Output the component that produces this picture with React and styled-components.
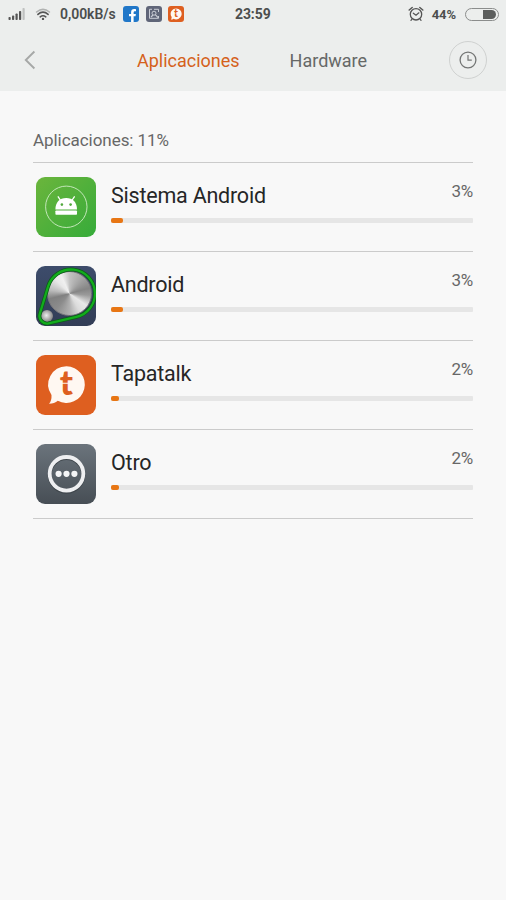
import React from 'react';
import styled, { createGlobalStyle } from 'styled-components';
import { FaFacebookF } from 'react-icons/fa';

const apps = [
  { name: 'Sistema Android', percent: 3, icon: 'system' },
  { name: 'Android', percent: 3, icon: 'knob' },
  { name: 'Tapatalk', percent: 2, icon: 'tapatalk' },
  { name: 'Otro', percent: 2, icon: 'other' },
];

const Signal = () => (
  <svg width="18" height="14" viewBox="0 0 18 14">
    <g fill="#555">
      <rect x="0.5" y="10" width="2.2" height="3" rx="0.8" />
      <rect x="4" y="8.5" width="2.2" height="4.5" rx="0.8" />
      <rect x="7.5" y="6.5" width="2.2" height="6.5" rx="0.8" />
      <rect x="11" y="4" width="2.2" height="9" rx="0.8" />
    </g>
    <rect x="14.5" y="1" width="2.2" height="12" rx="0.8" fill="#bfc1c0" />
  </svg>
);

const Wifi = () => (
  <svg width="16" height="14" viewBox="0 0 16 14" fill="none" strokeWidth="1.6" strokeLinecap="round">
    <path d="M1.6 5 Q8 -0.4 14.4 5" stroke="#b0b2b1" />
    <path d="M2.9 7.4 Q8 3 13.1 7.4" stroke="#555" />
    <path d="M5.2 9.8 Q8 7.6 10.8 9.8" stroke="#555" />
    <circle cx="8" cy="11.9" r="1.2" fill="#555" />
  </svg>
);

const Alarm = () => (
  <svg width="16" height="16" viewBox="0 0 16 16" fill="none" stroke="#555" strokeLinecap="round">
    <circle cx="8" cy="8.3" r="5.7" strokeWidth="1.3" />
    <path d="M5.3 7.2 L8 9.3 L10.9 6.8" strokeWidth="1.2" />
    <path d="M1.2 4 L4.2 1.5 M14.8 4 L11.8 1.5" strokeWidth="1.5" />
    <path d="M4 13 L3 14.4 M12 13 L13 14.4" strokeWidth="1.2" />
  </svg>
);

const TapatalkMark = ({ size }) => (
  <svg width={size} height={size} viewBox="0 0 60 60">
    <path
      d="M30.5 11.3 a18.3 18.3 0 1 1 -8.7 34.4 Q18.5 48.7 13 48.7 Q15.8 46 15.5 40 A18.3 18.3 0 0 1 30.5 11.3Z"
      fill="#fff8f2"
    />
    <text
      x="30.3"
      y="40.2"
      textAnchor="middle"
      fontFamily="Lato, sans-serif"
      fontWeight="900"
      fontSize="35"
      fill="#de5f20"
    >
      t
    </text>
    <path d="M22.5 28.2 H38" stroke="#fff8f2" strokeWidth="1.1" />
  </svg>
);

const AppIcon = ({ type }) => {
  switch (type) {
    case 'system':
      return (
        <Tile $background="linear-gradient(135deg, #6bb53c, #36ab3a)">
          <svg width="60" height="60" viewBox="0 0 60 60">
            <circle cx="30.3" cy="29.8" r="20.7" fill="none" stroke="#c3e6b8" strokeWidth="1" />
            <path d="M19.4 32.4 C19.4 25.5 23.5 21 30.2 21 S41 25.5 41 32.4Z" fill="#fff" />
            <path d="M22.2 19.8 L25 24 M38.3 19.8 L35.5 24" stroke="#fff" strokeWidth="1.3" strokeLinecap="round" />
            <rect x="19.4" y="33.5" width="21.6" height="4.2" rx="0.8" fill="#fff" />
            <circle cx="25.9" cy="27.6" r="1.3" fill="#52a93d" />
            <circle cx="34.6" cy="27.6" r="1.3" fill="#52a93d" />
          </svg>
        </Tile>
      );
    case 'knob':
      return (
        <Tile $background="linear-gradient(#3d4c6b, #323d56)">
          <Knob />
          <SmallKnob />
          <Belt width="60" height="60" viewBox="0 0 60 60" fill="none">
            <path
              d="M3.8 47.8 L12 20.6 A24 24 0 1 1 40.4 50.9 L12.7 57.3 A7.5 7.5 0 0 1 3.8 47.8Z"
              stroke="#0d5c1a"
              strokeWidth="3.8"
            />
            <path
              d="M3.8 47.8 L12 20.6 A24 24 0 1 1 40.4 50.9 L12.7 57.3 A7.5 7.5 0 0 1 3.8 47.8Z"
              stroke="#12ac1c"
              strokeWidth="2.3"
            />
          </Belt>
        </Tile>
      );
    case 'tapatalk':
      return (
        <Tile $background="#de5f20">
          <TapatalkMark size={60} />
        </Tile>
      );
    default:
      return (
        <Tile $background="linear-gradient(#6b747c, #474e55)">
          <svg width="60" height="60" viewBox="0 0 60 60">
            <circle cx="30.5" cy="31" r="16.8" fill="none" stroke="#3f464c" strokeWidth="3.8" />
            <circle cx="30.5" cy="29.8" r="16.8" fill="none" stroke="#eeeff1" strokeWidth="3.8" />
            <g fill="#f4f5f6">
              <circle cx="22.6" cy="29.8" r="3.1" />
              <circle cx="30.5" cy="29.8" r="3.1" />
              <circle cx="38.4" cy="29.8" r="3.1" />
            </g>
          </svg>
        </Tile>
      );
  }
};

const App = () => (
  <Screen>
    <GlobalStyle />
    <Header>
      <StatusBar>
        <StatusLeft>
          <Signal />
          <Wifi />
          <Speed>0,00kB/s</Speed>
          <Notifications>
            <Badge $color="#2077c8">
              <Facebook />
            </Badge>
            <Badge $color="#5f6578">
              <svg width="16" height="16" viewBox="0 0 16 16" fill="none" stroke="#c9ccd5">
                <path d="M6 3.3 H3.5 V12.3 H12.5 V10 M8 3.3 H12.5 V6" strokeWidth="1" />
                <circle cx="8" cy="7.2" r="2" strokeWidth="1" />
                <path d="M5 11 L7 9 M9.3 8.7 L12 11.5" strokeWidth="1.1" />
              </svg>
            </Badge>
            <Badge $color="#de5f20">
              <TapatalkMark size={18} />
            </Badge>
          </Notifications>
        </StatusLeft>
        <Time>23:59</Time>
        <StatusRight>
          <Alarm />
          <Charge>44%</Charge>
          <Battery>
            <Level />
          </Battery>
        </StatusRight>
      </StatusBar>
      <Nav>
        <Back>
          <svg width="12" height="20" viewBox="0 0 12 20" fill="none">
            <path d="M10.4 1.5 L1.8 10 L10.4 18.5" stroke="#a6a8a7" strokeWidth="1.9" />
          </svg>
        </Back>
        <Tabs>
          <Tab $active>Aplicaciones</Tab>
          <Tab>Hardware</Tab>
        </Tabs>
        <History>
          <svg width="18" height="18" viewBox="0 0 18 18" fill="none" stroke="#737574">
            <circle cx="9" cy="9" r="7.9" strokeWidth="1.3" />
            <path d="M9 4 V9.2 H12.8" strokeWidth="1.2" />
          </svg>
        </History>
      </Nav>
    </Header>
    <Content>
      <Summary>Aplicaciones: 11%</Summary>
      <List>
        {apps.map(({ name, percent, icon }) => (
          <Row key={name}>
            <AppIcon type={icon} />
            <Details>
              <Labels>
                <Name>{name}</Name>
                <Percent>{percent}%</Percent>
              </Labels>
              <Track>
                <Fill style={{ width: `${percent === 3 ? 12 : 8}px` }} />
              </Track>
            </Details>
          </Row>
        ))}
      </List>
    </Content>
  </Screen>
);

export default App;

const GlobalStyle = createGlobalStyle`
  * {
    box-sizing: border-box;
  }

  body {
    margin: 0;
    background: #f8f8f8;
    font-family: Roboto, sans-serif;
  }

  svg {
    display: block;
    flex-shrink: 0;
  }
`;

const Screen = styled.div`
  width: 506px;
  height: 900px;
  overflow: hidden;
  background: #f8f8f8;
`;

const Header = styled.header`
  height: 91px;
  background: #eceeed;
`;

const StatusBar = styled.div`
  display: grid;
  grid-template-columns: 227px 1fr auto;
  align-items: center;
  height: 28px;
  padding: 0 7px 0 8px;
  color: #4c4e4d;
  font-size: 14px;
  font-weight: 700;
`;

const StatusLeft = styled.div`
  display: flex;
  align-items: center;

  svg + svg {
    margin-left: 9px;
  }
`;

const StatusRight = styled.div`
  display: flex;
  align-items: center;
`;

const Speed = styled.span`
  width: 56px;
  margin-left: 9px;
  font-weight: 600;
  letter-spacing: -0.05px;
  white-space: nowrap;
`;

const Notifications = styled.div`
  display: flex;
  gap: 6.5px;
  margin-left: 7px;
`;

const Badge = styled.div`
  display: flex;
  align-items: center;
  justify-content: center;
  width: 16px;
  height: 16px;
  border-radius: 3px;
  background: ${({ $color }) => $color};
  overflow: hidden;
`;

const Facebook = styled(FaFacebookF)`
  width: 9px;
  height: 13px;
  margin: 3px 0 0 3px;
  color: #fff;
`;

const Time = styled.span`
  letter-spacing: -0.1px;
`;

const Charge = styled.span`
  margin: 0 9px 0 8px;
  font-size: 13px;
  letter-spacing: -0.1px;
`;

const Battery = styled.div`
  display: flex;
  justify-content: flex-end;
  width: 34px;
  height: 13px;
  padding: 1px 2px;
  border: 1px solid #8b8d8c;
  border-radius: 7px;
`;

const Level = styled.div`
  width: 13px;
  height: 9px;
  border-radius: 0 5px 5px 0;
  background: #5c5e5d;
`;

const Nav = styled.nav`
  display: grid;
  grid-template-columns: 38px 1fr 38px;
  align-items: center;
  height: 63px;
  padding: 0 19px 0 24px;
`;

const Back = styled.div`
  display: flex;
`;

const Tabs = styled.div`
  display: flex;
  justify-content: center;
  gap: 50px;
  padding: 3px 7px 0 0;
`;

const Tab = styled.span`
  font-size: 18px;
  line-height: 22px;
  color: ${({ $active }) => ($active ? '#d5611b' : '#666867')};
`;

const History = styled.div`
  display: flex;
  align-items: center;
  justify-content: center;
  width: 38px;
  height: 38px;
  border: 1px solid #cfd1d0;
  border-radius: 50%;
`;

const Content = styled.main`
  padding: 39px 33px 0;
`;

const Summary = styled.div`
  height: 32px;
  font-size: 17px;
  line-height: 21px;
  letter-spacing: -0.05px;
  color: #676767;
`;

const List = styled.div`
  border-top: 1px solid #cbcbcb;
`;

const Row = styled.div`
  display: flex;
  height: 89px;
  padding: 14px 0 0 3px;
  border-bottom: 1px solid #cbcbcb;
`;

const Tile = styled.div`
  position: relative;
  flex-shrink: 0;
  width: 60px;
  height: 60px;
  border-radius: 9px;
  background: ${({ $background }) => $background};
  overflow: hidden;
`;

const Knob = styled.div`
  position: absolute;
  left: 11px;
  top: 5px;
  width: 45px;
  height: 45px;
  border: 1.5px solid #77757a;
  border-radius: 50%;
  background: conic-gradient(
    #c2c2c2,
    #a8a8a8 35deg,
    #858585 75deg,
    #9a9a9a 95deg,
    #e8e8e8 125deg,
    #dcdcdc 150deg,
    #b0b0b0 180deg,
    #8c8c8c 220deg,
    #808080 255deg,
    #bcbcbc 280deg,
    #e8e8e8 315deg,
    #f0f0f0 335deg,
    #c2c2c2
  );
`;

const SmallKnob = styled.div`
  position: absolute;
  left: 5px;
  top: 44px;
  width: 12px;
  height: 12px;
  border-radius: 50%;
  background: radial-gradient(circle at 45% 45%, #eee, #9c9c9c 55%, #555);
`;

const Belt = styled.svg`
  position: absolute;
  inset: 0;
`;

const Details = styled.div`
  flex: 1;
  margin-left: 15px;
`;

const Labels = styled.div`
  display: flex;
  justify-content: space-between;
  height: 41px;
`;

const Name = styled.span`
  padding-top: 5px;
  font-size: 21.5px;
  line-height: 27px;
  letter-spacing: -0.22px;
  color: #262626;
`;

const Percent = styled.span`
  padding-top: 3px;
  font-size: 17px;
  line-height: 23px;
  letter-spacing: -0.3px;
  color: #676767;
`;

const Track = styled.div`
  height: 5px;
  border-radius: 1px;
  background: #e6e6e6;
`;

const Fill = styled.div`
  height: 5px;
  border-radius: 2px;
  background: #e87614;
`;
